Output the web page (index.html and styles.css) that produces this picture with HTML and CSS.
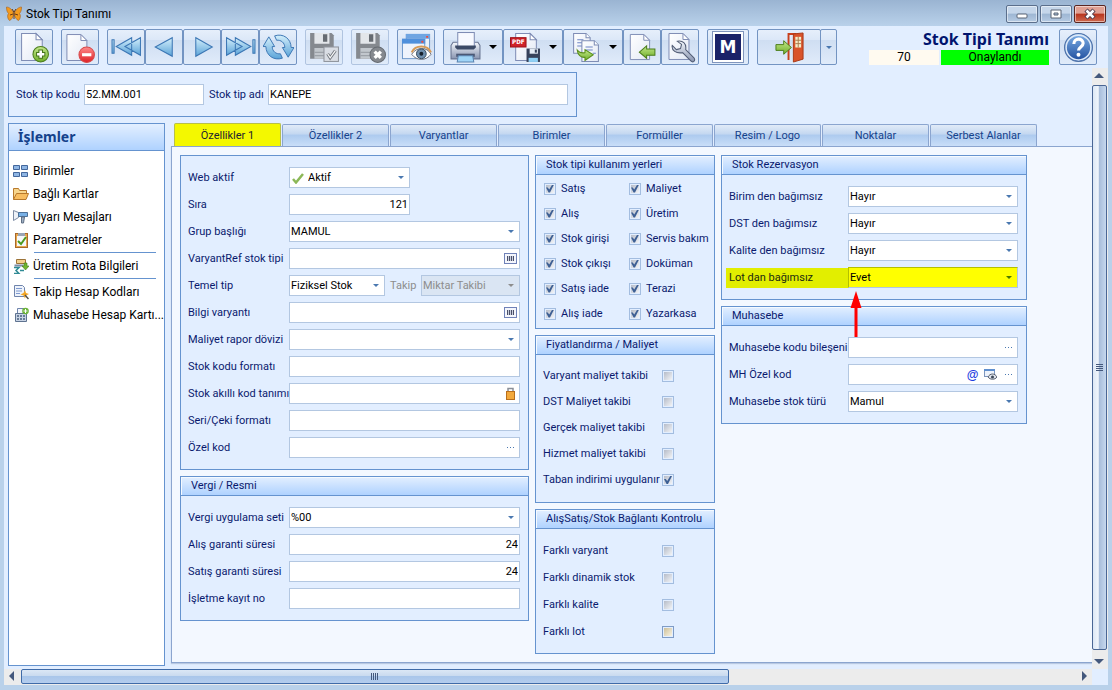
FILE: index.html
```html
<!DOCTYPE html>
<html lang="tr">
<head>
  <meta charset="UTF-8" />
  <meta name="viewport" content="width=device-width, initial-scale=1.0"/>
  <title>Stok Tipi Tanımı</title>
  <link rel="stylesheet" href="styles.css">
</head>
<body>
  <!-- shared gradients and icon parts -->
  <svg class="defs" width="0" height="0" aria-hidden="true">
    <defs>
      <linearGradient id="gBlue" x1="0" y1="0" x2="0" y2="1"><stop offset="0" stop-color="#d4effb"/><stop offset="1" stop-color="#5aa3d8"/></linearGradient>
      <linearGradient id="gPage" x1="0" y1="0" x2="1" y2="1"><stop offset="0" stop-color="#ffffff"/><stop offset="1" stop-color="#e3e9f5"/></linearGradient>
      <linearGradient id="gGreen" x1="0" y1="0" x2="0" y2="1"><stop offset="0" stop-color="#c3e88a"/><stop offset="1" stop-color="#6fae2a"/></linearGradient>
      <linearGradient id="gRed" x1="0" y1="0" x2="0" y2="1"><stop offset="0" stop-color="#ff8a8a"/><stop offset="1" stop-color="#dd1f26"/></linearGradient>
      <linearGradient id="gSteel" x1="0" y1="0" x2="0" y2="1"><stop offset="0" stop-color="#f4f7fc"/><stop offset="1" stop-color="#8894b0"/></linearGradient>
      <linearGradient id="gHelp" x1="0" y1="0" x2="0" y2="1"><stop offset="0" stop-color="#7fb0e6"/><stop offset="1" stop-color="#1d4c9c"/></linearGradient>
      <symbol id="page" viewBox="0 0 24 30"><path d="M1.500 1.500h14l6 6v20h-20z" fill="url(#gPage)" stroke="#7f8db5"/><path d="M15.500 1.500v6h6z" fill="#fff" stroke="#7f8db5"/></symbol>
      <symbol id="floppy" viewBox="0 0 24 26"><path d="M1 1h20l2 2v22H1z" fill="#85898f"/><path d="M5 1h14v10H5z" fill="#e3e6ea"/><path d="M13 2h4v7h-4z" fill="#666b72"/><path d="M5 15h14v10H5z" fill="#c2c7cd"/><path d="M5 19h14M5 22h14" stroke="#9da2a9"/></symbol>
    </defs>
  </svg>

  <div class="window">
    <header class="titlebar">
      <svg class="logo" viewBox="0 0 16 16" aria-hidden="true">
        <path d="M7.500 7C6 3 3 1 .5 1c0 3 .5 5 2 6.500C1 9 1.500 13 3.500 14.500 5.500 14 7 11 7.500 9zM8.500 7C10 3 13 1 15.500 1c0 3-.5 5-2 6.500 1.500 1.500 1 5.500-1 7C10.500 14 9 11 8.500 9z" fill="#f39a1e" stroke="#a8601a" stroke-width=".6"/>
        <path d="M8 5v8M6 3l2 3 2-3M4 9l3-1M12 9L9 8" stroke="#6b3a12" stroke-width="1" fill="none"/>
      </svg>
      <span class="caption">Stok Tipi Tanımı</span>
      <div class="window-buttons">
        <button aria-label="Simge durumuna küçült"><svg viewBox="0 0 12 12"><rect x="1" y="6" width="10" height="4" rx="1" fill="#fff" stroke="#5a6475"/></svg></button>
        <button aria-label="Ekranı kapla"><svg viewBox="0 0 12 12"><path d="M1 2h10v8H1zM4 5v2h4V5z" fill="#fff" fill-rule="evenodd" stroke="#5a6475"/></svg></button>
        <button class="close" aria-label="Kapat"><svg viewBox="0 0 12 12"><path d="M2 2l8 8M10 2l-8 8" stroke="#4d3a4a" stroke-width="4.500"/><path d="M2.500 2.500l7 7M9.500 2.500l-7 7" stroke="#fff" stroke-width="2.500"/></svg></button>
      </div>
    </header>

    <div class="toolbar">
      <div class="tool-group">
        <button class="tool" aria-label="Yeni"><svg viewBox="0 0 30 30"><use href="#page" x="1" y="0" width="24" height="30"/><circle cx="21" cy="21.500" r="7.500" fill="url(#gGreen)" stroke="#4b7d1c"/><path d="M21 17v9M16.500 21.500h9" stroke="#47761c" stroke-width="4.500"/><path d="M21 18v7M17.500 21.500h7" stroke="#fff" stroke-width="2.500"/></svg></button>
      </div>
      <div class="tool-group">
        <button class="tool" aria-label="Sil"><svg viewBox="0 0 30 30"><use href="#page" x="0" y="1" width="24" height="29"/><circle cx="21" cy="22" r="7.500" fill="url(#gRed)" stroke="#d84a4a"/><path d="M16.500 22h9" stroke="#fff" stroke-width="3"/></svg></button>
      </div>
      <div class="tool-group">
        <button class="tool" aria-label="İlk kayıt"><svg viewBox="0 0 30 30" fill="url(#gBlue)" stroke="#3b76b4"><path d="M1 7.500h2v13H1zM20 5.500v17L5 14zM28.500 5.500v17l-15-8.500z"/></svg></button>
        <button class="tool" aria-label="Önceki kayıt"><svg viewBox="0 0 30 30" fill="url(#gBlue)" stroke="#3b76b4"><path d="M22.500 5.500v18L6 14.500z"/></svg></button>
        <button class="tool" aria-label="Sonraki kayıt"><svg viewBox="0 0 30 30" fill="url(#gBlue)" stroke="#3b76b4"><path d="M8.500 5.500v18l16-9z"/></svg></button>
        <button class="tool" aria-label="Son kayıt"><svg viewBox="0 0 30 30" fill="url(#gBlue)" stroke="#3b76b4"><path d="M1.500 5.500v17l15-8.500zM10 5.500v17L25 14zM27 7.500h2v13h-2z"/></svg></button>
        <button class="tool" aria-label="Yenile"><svg viewBox="0 0 32 30" fill="url(#gBlue)" stroke="#3b76b4"><path d="M0 14L6 4l6 10H9.500c0 5 4 8 8.500 7.500l2 4.500C11 29 3 23 3 14z"/><path d="M32 15l-6 10-6-10h2.500c0-5-4-8-8.500-7.500L12 3C21 0 29 6 29 15z"/></svg></button>
      </div>
      <div class="tool-group">
        <button class="tool" disabled aria-label="Kaydet"><svg viewBox="0 0 30 30"><use href="#floppy" x="0" y="0" width="25" height="27"/><rect x="14.500" y="14.500" width="14" height="14" fill="#d9dde4" stroke="#8f949c"/><path d="M18 21l2.500 4 5-7" fill="none" stroke="#777c84" stroke-width="3"/><path d="M18 21l2.500 4 5-7" fill="none" stroke="#fff" stroke-width="1"/></svg></button>
      </div>
      <div class="tool-group">
        <button class="tool" disabled aria-label="Vazgeç"><svg viewBox="0 0 30 30"><use href="#floppy" x="0" y="0" width="25" height="27"/><circle cx="22" cy="22" r="7.500" fill="#85898f" stroke="#666b72"/><path d="M19 19l6 6M25 19l-6 6" stroke="#fff" stroke-width="3.200"/></svg></button>
      </div>
      <div class="tool-group">
        <button class="tool" aria-label="Görüntüle"><svg viewBox="0 0 32 30"><rect x="5.500" y="1.500" width="24" height="16" fill="#e8f1fc" stroke="#6b95c8"/><path d="M5 1h25v5H5z" fill="#6fa5e2"/><rect x="1.500" y="6.500" width="23" height="20" fill="#eef3fc" stroke="#6b95c8"/><path d="M1 6h24v5H1z" fill="#4f90dc"/><path d="M26 3h2v2h-2zM21 8h2v2h-2z" fill="#f04a3c"/><path d="M11 22c5-8 16-8 20 0-5 7-15 7-20 0z" fill="#fff" stroke="#6f7480"/><path d="M11 20c4-8 16-8 20 0" fill="none" stroke="#d69a56" stroke-width="2"/><circle cx="21" cy="21.500" r="5" fill="#6f8fae" stroke="#34495e"/><circle cx="21" cy="21.500" r="2" fill="#16202c"/></svg></button>
      </div>
      <div class="tool-group">
        <button class="tool wide" aria-label="Yazdır"><svg viewBox="0 0 30 30"><path d="M1 13l2-3h24l2 3v13H1z" fill="url(#gSteel)" stroke="#66728f"/><rect x="7.500" y=".5" width="16" height="14" fill="#f7f9ff" stroke="#7f8db5"/><path d="M5 13h20v2l-2 2H7l-2-2z" fill="#3c4a66"/><path d="M6 21h18v3H6z" fill="#4b5875"/><path d="M8 23h14l1 6H7z" fill="#9fd4f7" stroke="#5c84b0"/></svg><i class="drop"></i></button>
        <button class="tool wide" aria-label="PDF kaydet"><svg viewBox="0 0 30 30"><use href="#page" x="4" y="0" width="24" height="30"/><rect x=".5" y="5.500" width="15" height="9" fill="#cf2229" stroke="#9e1218"/><text class="pdf" x="2" y="12">PDF</text><path d="M16 16h13v13H16z" fill="#36415a"/><path d="M19 16h8v5h-8z" fill="#e4ebf5"/><path d="M24 17h2v3h-2z" fill="#36415a"/><path d="M18 25h9v4h-9z" fill="#8fd0f5"/></svg><i class="drop"></i></button>
        <button class="tool wide" aria-label="Kopyala"><svg viewBox="0 0 30 30"><path d="M3.500 1.500h12l4 4v15h-16z" fill="url(#gPage)" stroke="#7f8db5"/><path d="M15.500 1.500v4h4" fill="#fff" stroke="#7f8db5"/><path d="M7 7.500h6M7 10.500h5M7 13.500h5" stroke="#6f86c4"/><path d="M11.500 8.500h12l4 4v16h-16z" fill="url(#gPage)" stroke="#7f8db5"/><path d="M23.500 8.500v4h4" fill="#fff" stroke="#7f8db5"/><path d="M15 14.500h7M15 17.500h7M22 20.500h3" stroke="#6f86c4"/><path d="M7 17.500c2 2.500 5 3 7.500 2.500v-3l8 5-8 5.500v-3c-4 .5-7-2.500-7.500-7z" fill="url(#gGreen)" stroke="#5a8f1c"/></svg><i class="drop"></i></button>
        <button class="tool" aria-label="İçe aktar"><svg viewBox="0 0 30 30"><use href="#page" x="1" y="1" width="24" height="28"/><path d="M12 19.500l7-6v3h8v6h-8v3z" fill="url(#gGreen)" stroke="#4b7d1c"/></svg></button>
        <button class="tool" aria-label="Ayarlar"><svg viewBox="0 0 30 30"><use href="#page" x="2" y="0" width="24" height="29"/><path d="M7 13l4 4 4-1 1-4-4-3c5-1 9 2 8 8l8 8c2 3-1 5-3 3l-8-8c-6 1-11-2-10-7z" fill="url(#gSteel)" stroke="#525d75"/></svg></button>
      </div>
      <div class="tool-group">
        <button class="tool m-tool" aria-label="Mikro"><span>M</span></button>
      </div>
      <div class="tool-group">
        <button class="tool exit" aria-label="Çıkış"><svg viewBox="0 0 30 32"><path d="M14 29V2h8" fill="none" stroke="#c8401c" stroke-width="2"/><path d="M19 2l10-1v27l-10 3z" fill="#d9532a" stroke="#a83a18"/><path d="M21 5h6v11h-6z" fill="#f6ecc8"/><path d="M24 5v11M21 8.500h6M21 12h6" stroke="#a87a4a"/><path d="M1 13h8v-4l8 7-8 7v-4H1z" fill="url(#gGreen)" stroke="#4b7d1c"/></svg></button>
        <button class="tool split" aria-label="Çıkış seçenekleri"><i class="caret"></i></button>
      </div>
      <div class="record">
        <h1>Stok Tipi Tanımı</h1>
        <div class="status"><span class="no">70</span><span class="state">Onaylandı</span></div>
      </div>
      <button class="tool help" aria-label="Yardım"><svg viewBox="0 0 30 30"><circle cx="15" cy="15" r="13.500" fill="url(#gHelp)" stroke="#4e72a8"/><circle cx="15" cy="15" r="12" fill="none" stroke="#dce9f8" stroke-width="1.500"/><path d="M10.500 11.500c0-6 9-6 9-.5 0 3.500-4.500 3.500-4.500 7" fill="none" stroke="#fff" stroke-width="3"/><circle cx="15" cy="22" r="1.900" fill="#fff"/></svg></button>
    </div>

    <div class="viewport">
      <main class="content">
        <section class="box key-box">
          <label for="kod">Stok tip kodu</label>
          <input class="kod" id="kod" type="text" value="52.MM.001">
          <label class="second" for="ad">Stok tip adı</label>
          <input class="ad" id="ad" type="text" value="KANEPE">
        </section>

        <div class="workspace">
          <aside class="sidebar">
            <h2>İşlemler</h2>
            <nav>
              <a href="#"><svg viewBox="0 0 16 16"><path d="M.5 2.500h6v4h-6zM8.500 2.500h6v4h-6zM.5 9.500h6v4h-6zM8.500 9.500h6v4h-6z" fill="#8fb6e4" stroke="#44679c"/></svg>Birimler</a>
              <a href="#"><svg viewBox="0 0 16 16"><path d="M.5 13.500v-11h5l1 2h7v3" fill="#f7d58c" stroke="#b8792c"/><path d="M.5 13.500l3-6h12l-2.500 6z" fill="#f8bd60" stroke="#b8792c"/></svg>Bağlı Kartlar</a>
              <a href="#"><svg viewBox="0 0 16 16"><path d="M.5 1.500l5 2v5l-5 3z" fill="#eef2f8" stroke="#7f8da5"/><path d="M5.500 3.500h9v4h-9z" fill="#79b1e6" stroke="#4d7198"/><path d="M8.500 8h3l-1 6h-2z" fill="#9fb0c4" stroke="#5f6f84"/></svg>Uyarı Mesajları</a>
              <a href="#"><svg viewBox="0 0 16 16"><rect x="2.500" y="1.500" width="12" height="14" fill="#e9a84e" stroke="#a8692a"/><path d="M4 4h9v10H4z" fill="#f5f7fa"/><path d="M5 1h7v3H5z" fill="#9aa5b5"/><path d="M5 9l3 3 5-7" fill="none" stroke="#4c9a1e" stroke-width="2"/></svg>Parametreler</a>
              <hr>
              <a href="#"><svg viewBox="0 0 16 16"><path d="M3.500 1.500h9v4h-9z" fill="#f2d08c" stroke="#9c7338"/><path d="M1.500 7.500h9" stroke="#7f8da5" stroke-width="2"/><path d="M11 5h3v3h2l-3.500 4L9 8h2z" fill="#6fb52e" stroke="#3f7d16" stroke-width=".6"/><path d="M1 9.500h5l-3 3 3 3H1M7 12.500h4" fill="none" stroke="#2f8a94" stroke-width="1.500"/></svg>Üretim Rota Bilgileri</a>
              <hr>
              <a href="#"><svg viewBox="0 0 16 16"><path d="M1.500 1.500h8l2 2v9h-10z" fill="#eef3fb" stroke="#6f84ac"/><path d="M3 4.500h6M3 7h6M3 9.500h4" stroke="#7f9ad0"/><path d="M12 6l1 3 3 1-3 1.500-1 3-1.500-3-3-1 3-1.500z" fill="#f5a623"/><path d="M12 11l3.500 4" stroke="#55504a" stroke-width="1.500"/></svg>Takip Hesap Kodları</a>
              <a href="#"><svg viewBox="0 0 16 16"><path d="M4.500 1.500h8v6h-8z" fill="#f3f6fb" stroke="#6f84ac"/><path d="M2.500 6.500h11v8h-11z" fill="#c8d3e4" stroke="#5f7390"/><path d="M4 9h2M7 9h2M10 9h2M4 12h2M7 12h2M10 12h2" stroke="#48607f" stroke-width="1.500"/><circle cx="12.500" cy="4" r="3.300" fill="#6db33a"/><path d="M12.500 2v4M10.500 4h4" stroke="#fff"/></svg>Muhasebe Hesap Kartı...</a>
            </nav>
          </aside>

          <div class="tabs-area">
            <div class="tabs" role="tablist">
              <button class="tab active" role="tab" aria-selected="true">Özellikler 1</button>
              <button class="tab" role="tab">Özellikler 2</button>
              <button class="tab" role="tab">Varyantlar</button>
              <button class="tab" role="tab">Birimler</button>
              <button class="tab" role="tab">Formüller</button>
              <button class="tab" role="tab">Resim / Logo</button>
              <button class="tab" role="tab">Noktalar</button>
              <button class="tab" role="tab">Serbest Alanlar</button>
            </div>

            <div class="panel">
              <div class="col">
                <section class="box">
                  <div class="rows">
                    <div class="row">
                      <label for="webaktif">Web aktif</label>
                      <div class="field select short with-icon">
                        <svg class="lead" viewBox="0 0 12 12"><path d="M1 7l3 3.500 7-8.500" fill="none" stroke="#8cb858" stroke-width="2.500"/></svg>
                        <select id="webaktif"><option>Aktif</option></select>
                      </div>
                    </div>
                    <div class="row">
                      <label for="sira">Sıra</label>
                      <div class="field short"><input class="num" id="sira" type="text" value="121"></div>
                    </div>
                    <div class="row">
                      <label for="grup">Grup başlığı</label>
                      <div class="field select"><select id="grup"><option>MAMUL</option></select></div>
                    </div>
                    <div class="row">
                      <label for="varyantref">VaryantRef stok tipi</label>
                      <div class="field">
                        <input id="varyantref" type="text">
                        <div class="addons"><button class="code" aria-label="Seç"></button></div>
                      </div>
                    </div>
                    <div class="row">
                      <label for="temeltip">Temel tip</label>
                      <div class="pair">
                        <div class="field select"><select id="temeltip"><option>Fiziksel Stok</option></select></div>
                        <label class="off" for="takip">Takip</label>
                        <div class="field select off"><select id="takip" disabled><option>Miktar Takibi</option></select></div>
                      </div>
                    </div>
                    <div class="row">
                      <label for="bilgi">Bilgi varyantı</label>
                      <div class="field">
                        <input id="bilgi" type="text">
                        <div class="addons"><button class="code" aria-label="Seç"></button></div>
                      </div>
                    </div>
                    <div class="row">
                      <label for="doviz">Maliyet rapor dövizi</label>
                      <div class="field select"><select id="doviz"><option></option></select></div>
                    </div>
                    <div class="row">
                      <label for="kodformat">Stok kodu formatı</label>
                      <div class="field"><input id="kodformat" type="text"></div>
                    </div>
                    <div class="row">
                      <label for="akilli">Stok akıllı kod tanımı</label>
                      <div class="field">
                        <input id="akilli" type="text">
                        <div class="addons"><button aria-label="Kilit"><svg width="13" height="13" viewBox="0 0 13 13"><path d="M4 6V1.500h5V6" fill="none" stroke="#8a8f98" stroke-width="1.500"/><rect x="2.500" y="4.500" width="8" height="8" fill="#f3a93c" stroke="#b96f1c"/></svg></button></div>
                      </div>
                    </div>
                    <div class="row">
                      <label for="seri">Seri/Çeki formatı</label>
                      <div class="field"><input id="seri" type="text"></div>
                    </div>
                    <div class="row">
                      <label for="ozelkod">Özel kod</label>
                      <div class="field">
                        <input id="ozelkod" type="text">
                        <div class="addons"><button class="dots" aria-label="Seç"></button></div>
                      </div>
                    </div>
                  </div>
                </section>

                <section class="box">
                  <h3>Vergi / Resmi</h3>
                  <div class="rows">
                    <div class="row">
                      <label for="vergi">Vergi uygulama seti</label>
                      <div class="field select"><select id="vergi"><option>%00</option></select></div>
                    </div>
                    <div class="row">
                      <label for="alisg">Alış garanti süresi</label>
                      <div class="field"><input class="num" id="alisg" type="text" value="24"></div>
                    </div>
                    <div class="row">
                      <label for="satisg">Satış garanti süresi</label>
                      <div class="field"><input class="num" id="satisg" type="text" value="24"></div>
                    </div>
                    <div class="row">
                      <label for="isletme">İşletme kayıt no</label>
                      <div class="field"><input id="isletme" type="text"></div>
                    </div>
                  </div>
                </section>
              </div>

              <div class="col">
                <section class="box">
                  <h3>Stok tipi kullanım yerleri</h3>
                  <div class="usage">
                    <label><input type="checkbox" checked>Satış</label>
                    <label><input type="checkbox" checked>Maliyet</label>
                    <label><input type="checkbox" checked>Alış</label>
                    <label><input type="checkbox" checked>Üretim</label>
                    <label><input type="checkbox" checked>Stok girişi</label>
                    <label><input type="checkbox" checked>Servis bakım</label>
                    <label><input type="checkbox" checked>Stok çıkışı</label>
                    <label><input type="checkbox" checked>Doküman</label>
                    <label><input type="checkbox" checked>Satış iade</label>
                    <label><input type="checkbox" checked>Terazi</label>
                    <label><input type="checkbox" checked>Alış iade</label>
                    <label><input type="checkbox" checked>Yazarkasa</label>
                  </div>
                </section>

                <section class="box">
                  <h3>Fiyatlandırma / Maliyet</h3>
                  <div class="checks tight">
                    <label>Varyant maliyet takibi<input type="checkbox"></label>
                    <label>DST Maliyet takibi<input type="checkbox"></label>
                    <label>Gerçek maliyet takibi<input type="checkbox"></label>
                    <label>Hizmet maliyet takibi<input type="checkbox"></label>
                    <label>Taban indirimi uygulanır<input type="checkbox" checked></label>
                  </div>
                </section>

                <section class="box">
                  <h3>AlışSatış/Stok Bağlantı Kontrolu</h3>
                  <div class="checks">
                    <label>Farklı varyant<input type="checkbox"></label>
                    <label>Farklı dinamik stok<input type="checkbox"></label>
                    <label>Farklı kalite<input type="checkbox"></label>
                    <label>Farklı lot<input class="warm" type="checkbox"></label>
                  </div>
                </section>
              </div>

              <div class="col">
                <section class="box">
                  <h3>Stok Rezervasyon</h3>
                  <div class="rows wide-label">
                    <div class="row">
                      <label for="birimden">Birim den bağımsız</label>
                      <div class="field select"><select id="birimden"><option>Hayır</option></select></div>
                    </div>
                    <div class="row">
                      <label for="dstden">DST den bağımsız</label>
                      <div class="field select"><select id="dstden"><option>Hayır</option></select></div>
                    </div>
                    <div class="row">
                      <label for="kaliteden">Kalite den bağımsız</label>
                      <div class="field select"><select id="kaliteden"><option>Hayır</option></select></div>
                    </div>
                    <div class="row marked">
                      <label for="lotdan">Lot dan bağımsız</label>
                      <div class="field select"><select id="lotdan"><option>Evet</option></select></div>
                      <svg class="arrow" viewBox="0 0 12 46" aria-hidden="true"><path d="M6 0l5.500 17H7.500v29h-3V17H.5z" fill="#ff0000"/></svg>
                    </div>
                  </div>
                </section>

                <section class="box">
                  <h3>Muhasebe</h3>
                  <div class="rows wide-label">
                    <div class="row">
                      <label for="muhkod">Muhasebe kodu bileşeni</label>
                      <div class="field">
                        <input id="muhkod" type="text">
                        <div class="addons"><button class="dots" aria-label="Seç"></button></div>
                      </div>
                    </div>
                    <div class="row">
                      <label for="mhozel">MH Özel kod</label>
                      <div class="field">
                        <input id="mhozel" type="text">
                        <div class="addons">
                          <button class="at">@</button>
                          <button aria-label="Görüntüle"><svg width="13" height="13" viewBox="0 0 13 13"><rect x=".5" y="1.500" width="10" height="7" fill="#eef3fb" stroke="#7d96bd"/><path d="M0 1h11v2H0z" fill="#5f8fce"/><path d="M4 9c2-4 7-4 9 0-2 3-7 3-9 0z" fill="#dfe4ec" stroke="#5b6270"/><circle cx="8.500" cy="9" r="1.500" fill="#3c4656"/></svg></button>
                          <button class="dots" aria-label="Seç"></button>
                        </div>
                      </div>
                    </div>
                    <div class="row">
                      <label for="muhtur">Muhasebe stok türü</label>
                      <div class="field select"><select id="muhtur"><option>Mamul</option></select></div>
                    </div>
                  </div>
                </section>
              </div>
            </div>
          </div>
        </div>
      </main>

      <div class="vscroll">
        <i class="up"></i>
        <div class="thumb"><span class="grip"></span></div>
        <i class="down"></i>
      </div>
      <div class="hscroll">
        <i class="left"></i>
        <div class="track"><div class="thumb"><span class="grip"></span></div></div>
        <i class="right"></i>
      </div>
    </div>
  </div>
</body>
</html>
```
FILE: styles.css
```css
* {
  box-sizing: border-box;
}
html, body {
  margin: 0;
  padding: 0;
  height: 100%;
  overflow: hidden;
}
body {
  font-family: Roboto, Tahoma, sans-serif;
  font-size: 11px;
  line-height: 14px;
  color: #0a1a6e;
  background: #b9d1ea;
}
button, input, select {
  font: inherit;
  color: inherit;
  margin: 0;
}
h1, h2, h3 {
  margin: 0;
}
.defs {
  position: absolute;
}
.window {
  display: flex;
  flex-direction: column;
  height: 100%;
  padding: 0 4px 5px;
  background: linear-gradient(#9ab4d2, #b9d1ea 26px);
}

/* title bar */
.titlebar {
  display: flex;
  align-items: center;
  flex: none;
  height: 26px;
  padding: 2px 2px 0;
}
.logo {
  width: 16px;
  height: 16px;
}
.caption {
  flex: 1;
  margin-left: 4px;
  font-size: 12px;
  color: #000;
}
.window-buttons {
  display: flex;
  gap: 2px;
}
.window-buttons button {
  display: flex;
  align-items: center;
  justify-content: center;
  width: 32px;
  height: 18px;
  padding: 0;
  border: 1px solid #5b6f8c;
  border-radius: 2px;
  background: linear-gradient(#c5d6ea 45%, #9db6d3 50%, #b6cbe3);
  box-shadow: inset 0 0 0 1px rgba(255,255,255,0.5);
}
.window-buttons svg {
  width: 12px;
  height: 12px;
}
.window-buttons .close {
  border-color: #5a2622;
  background: linear-gradient(#e0a093 45%, #b8341c 50%, #cf6a50);
}

/* toolbar */
.toolbar {
  display: flex;
  align-items: flex-start;
  flex: none;
  gap: 8px;
  height: 42px;
  padding: 3px 11px 0 11px;
  background: #e2eeff;
}
.tool-group {
  display: flex;
}
.tool {
  display: flex;
  align-items: center;
  justify-content: center;
  flex: none;
  width: 38px;
  height: 36px;
  padding: 0;
  border: 1px solid #7394c2;
  border-radius: 2px;
  background: linear-gradient(#e6effb, #dce8f8 28%, #cfdef2 30%, #e0ebfa);
}
.tool svg {
  width: 31px;
  height: 31px;
}
.tool:disabled {
  border-color: #b0c4e0;
}
.tool.wide {
  width: 60px;
  gap: 8px;
}
.tool.exit {
  width: 64px;
}
.tool.split {
  width: 17px;
  margin-left: -1px;
}
.tool.m-tool {
  width: 42px;
}
.m-tool span {
  width: 30px;
  height: 30px;
  border: 2px solid #fff;
  outline: 1px solid #8095bd;
  background: #1a2268;
  color: #fff;
  font: bold 17px/26px "DejaVu Sans", sans-serif;
}
.pdf {
  font: bold 6px "DejaVu Sans Condensed", sans-serif;
  fill: #fff;
}
.drop {
  border: 4px solid transparent;
  border-top-color: #000;
  border-bottom: 0;
}
.caret {
  border: 3px solid transparent;
  border-top-color: #4a78b0;
  border-bottom: 0;
}
.record {
  flex: 1;
  display: flex;
  flex-direction: column;
  align-items: flex-end;
}
.record h1 {
  font: bold 16px/21px "Noto Sans", sans-serif;
  color: #00146e;
}
.status {
  display: flex;
  gap: 2px;
  font-size: 12px;
  line-height: 15px;
  color: #000;
  text-align: center;
}
.status .no {
  width: 70px;
  background: #fffaf0;
}
.status .state {
  width: 108px;
  background: #00ff00;
}
.tool.help {
  margin-left: 2px;
}

/* scrolled area */
.viewport {
  flex: 1;
  min-height: 0;
  display: grid;
  grid-template-columns: minmax(0, 1fr) 16px;
  grid-template-rows: minmax(0, 1fr) 16px;
  background: #e2eeff;
}
.content {
  display: flex;
  flex-direction: column;
  gap: 6px;
  padding: 4px 0 3px 4px;
  overflow: hidden;
}
.box {
  border: 1px solid #6593cf;
  background: #e2eeff;
}
.key-box {
  display: flex;
  align-items: center;
  align-self: flex-start;
  height: 45px;
  padding: 0 8px 0 7px;
}
.key-box label {
  width: 68px;
  white-space: nowrap;
}
.key-box .second {
  width: 64px;
  padding-left: 5px;
}
input[type="text"], select {
  width: 100%;
  height: 21px;
  padding: 0 1px;
  border: 1px solid #b3c7e1;
  border-radius: 0;
  outline: none;
  background: #fff;
  color: #000;
}
.key-box .kod {
  width: 120px;
}
.key-box .ad {
  width: 300px;
}
.workspace {
  flex: 1;
  min-height: 0;
  display: flex;
  gap: 6px;
}

/* sidebar */
.sidebar {
  flex: none;
  width: 157px;
  border: 1px solid #6593cf;
  background: #fff;
  font-size: 12px;
}
.sidebar h2 {
  height: 27px;
  padding-left: 9px;
  border-bottom: 1px solid #6593cf;
  background: linear-gradient(#e3efff, #afd2ff);
  color: #15428b;
  font: bold 14px/26px "Noto Sans", sans-serif;
}
.sidebar nav {
  padding-top: 8px;
}
.sidebar a {
  display: flex;
  align-items: center;
  gap: 4px;
  height: 23px;
  padding-left: 4px;
  color: #000;
  text-decoration: none;
  white-space: nowrap;
}
.sidebar a svg {
  flex: none;
  width: 16px;
  height: 16px;
}
.sidebar hr {
  height: 1px;
  margin: 1px 8px 1px 25px;
  border: 0;
  background: #6593cf;
}

/* tabs */
.tabs-area {
  flex: 1;
  min-width: 0;
  display: flex;
  flex-direction: column;
}
.tabs {
  display: flex;
  flex: none;
  gap: 1px;
  padding-left: 3px;
}
.tab {
  flex: none;
  width: 107px;
  height: 22px;
  margin-top: 1px;
  padding: 1px 0 0;
  border: 1px solid #8ba5cf;
  border-bottom: 0;
  border-radius: 2px 2px 0 0;
  background: linear-gradient(#e1ebf8, #c6d9f1 40%, #aecbef 50%, #c9def8);
  color: #15428b;
}
.tab.active {
  height: 23px;
  margin: 0;
  border-color: #b8bf4a;
  background: #f4f800;
  color: #1c2430;
}
.panel {
  flex: 1;
  min-height: 0;
  display: flex;
  align-items: flex-start;
  gap: 6px;
  margin-bottom: 3px;
  padding: 8px;
  border: 1px solid #8ba5cf;
  border-right: 0;
  background: #f3f8ff;
  box-shadow: 0 1px 1px #b9c9e2;
}
.col {
  display: flex;
  flex-direction: column;
  flex: none;
  gap: 6px;
  width: 349px;
}
.col:nth-child(2) {
  width: 180px;
}
.col:nth-child(3) {
  width: 306px;
}
h3 {
  height: 19px;
  padding-left: 10px;
  border-bottom: 1px solid #6593cf;
  background: linear-gradient(#e3efff, #afd2ff);
  box-shadow: inset 1px 1px 0 #f5faff;
  font-weight: normal;
  font-size: 11px;
  line-height: 18px;
  white-space: nowrap;
}

/* form rows */
.rows {
  display: flex;
  flex-direction: column;
  gap: 6px;
  padding: 11px 8px 11px 7px;
}
.row {
  display: grid;
  grid-template-columns: 101px minmax(0, 1fr);
  align-items: center;
  white-space: nowrap;
}
.wide-label .row {
  grid-template-columns: 119px minmax(0, 1fr);
}
.field {
  position: relative;
  height: 21px;
}
.field.short {
  width: 121px;
}
.num {
  text-align: right;
}
select {
  appearance: none;
}
.select::after {
  content: "";
  position: absolute;
  top: 9px;
  right: 6px;
  border: 3px solid transparent;
  border-top-color: #4a78b0;
  border-bottom: 0;
  pointer-events: none;
}
.lead {
  position: absolute;
  top: 5px;
  left: 3px;
  width: 12px;
  height: 12px;
}
.with-icon select {
  padding-left: 18px;
}
.pair {
  display: grid;
  grid-template-columns: 96px 36px minmax(0, 1fr);
  align-items: center;
}
label.off {
  padding-left: 5px;
  color: #8d8d8d;
}
.off select {
  background: #dae5f3;
  color: #8d8d8d;
  opacity: 1;
}
.off::after {
  border-top-color: #8d8d8d;
}
.addons {
  position: absolute;
  top: 0;
  right: 3px;
  display: flex;
  align-items: center;
  gap: 5px;
  height: 21px;
}
.addons button {
  display: flex;
  justify-content: center;
  width: 13px;
  padding: 0;
  border: 0;
  background: none;
}
.addons .code {
  height: 11px;
  border: 1px solid #7082b8;
  background: repeating-linear-gradient(90deg, #4a5068 0 1px, #c9cedd 1px 2px) 2px 2px / 7px 5px no-repeat, #f4f6fc;
}
.addons .dots {
  height: 1px;
  background: repeating-linear-gradient(90deg, #4a78b0 0 1px, transparent 1px 3px) 3px 0 / 8px 1px no-repeat;
}
.addons .at {
  color: #1c3ce0;
  font: bold 12px/14px "Liberation Sans", sans-serif;
}
.marked {
  position: relative;
}
.marked label {
  height: 20px;
  margin-left: -3px;
  padding-left: 3px;
  background: #e2ee00;
  color: #1a2a10;
  line-height: 20px;
}
.marked select {
  border-top-color: #b3bf00;
  border-left-color: #b3bf00;
  background: #ffff00;
}
.marked .select::after {
  border-top-color: #4a7800;
}
.arrow {
  position: absolute;
  top: 24px;
  left: 121px;
  z-index: 1;
  width: 12px;
  height: 46px;
}

/* check boxes */
input[type="checkbox"] {
  appearance: none;
  flex: none;
  display: grid;
  place-items: center;
  width: 12px;
  height: 12px;
  border: 1px solid #a3bde0;
  background: linear-gradient(135deg, #b6bcc8, #f2f4f7) content-box #fff;
  padding: 1px;
}
input[type="checkbox"]:checked::before {
  content: "";
  width: 8px;
  height: 8px;
  background: #3d5f94;
  clip-path: polygon(0 38%, 22% 38%, 40% 62%, 78% 0, 100% 0, 50% 100%, 32% 100%);
}
input[type="checkbox"].warm {
  background-image: linear-gradient(135deg, #cdbf98, #f8f3e4);
  border-color: #7f9cc6;
}
.usage {
  display: grid;
  grid-template-columns: 85px 1fr;
  grid-auto-rows: 25px;
  padding: 1px 0 2px 8px;
}
.usage label, .checks label {
  display: flex;
  align-items: center;
  white-space: nowrap;
}
.usage label {
  gap: 5px;
}
.checks {
  padding: 8px 40px 8px 7px;
}
.checks label {
  justify-content: space-between;
  height: 27px;
}
.checks.tight {
  padding-bottom: 9px;
}
.checks.tight label {
  height: 26px;
}

/* scroll bars */
.vscroll, .hscroll {
  display: flex;
  background: #ececec;
}
.vscroll {
  flex-direction: column;
  align-items: flex-start;
}
.vscroll .thumb {
  flex: 1;
  display: flex;
  align-items: center;
  justify-content: center;
  width: 15px;
  border: 1px solid #4a6694;
  border-radius: 2px;
  background: linear-gradient(90deg, #dce7f5, #f0f5fb 40%, #a9bedb 50%, #c6d8ee);
}
.vscroll .grip {
  width: 7px;
  height: 8px;
  background: repeating-linear-gradient(#44587c 0 1px, transparent 1px 2px);
}
.hscroll {
  align-items: flex-start;
}
.hscroll .track {
  flex: 1;
}
.hscroll .thumb {
  display: flex;
  align-items: center;
  justify-content: center;
  width: 67%;
  height: 15px;
  border: 1px solid #3f6ba8;
  border-radius: 2px;
  background: linear-gradient(#dbe7f5, #c9daef 45%, #a9c6ea 50%, #b4cdee);
}
.hscroll .grip {
  width: 8px;
  height: 7px;
  background: repeating-linear-gradient(90deg, #44587c 0 1px, transparent 1px 2px);
}
.vscroll i, .hscroll i {
  border: 5px solid transparent;
}
.vscroll .up {
  margin: 5px 2px 7px;
  border-top: 0;
  border-bottom-color: #44587c;
}
.vscroll .down {
  margin: 9px 2px 5px;
  border-bottom: 0;
  border-top-color: #44587c;
}
.hscroll .left {
  margin: 2px 7px 0 5px;
  border-left: 0;
  border-right-color: #44587c;
}
.hscroll .right {
  margin: 2px 5px 0;
  border-right: 0;
  border-left-color: #44587c;
}
```
